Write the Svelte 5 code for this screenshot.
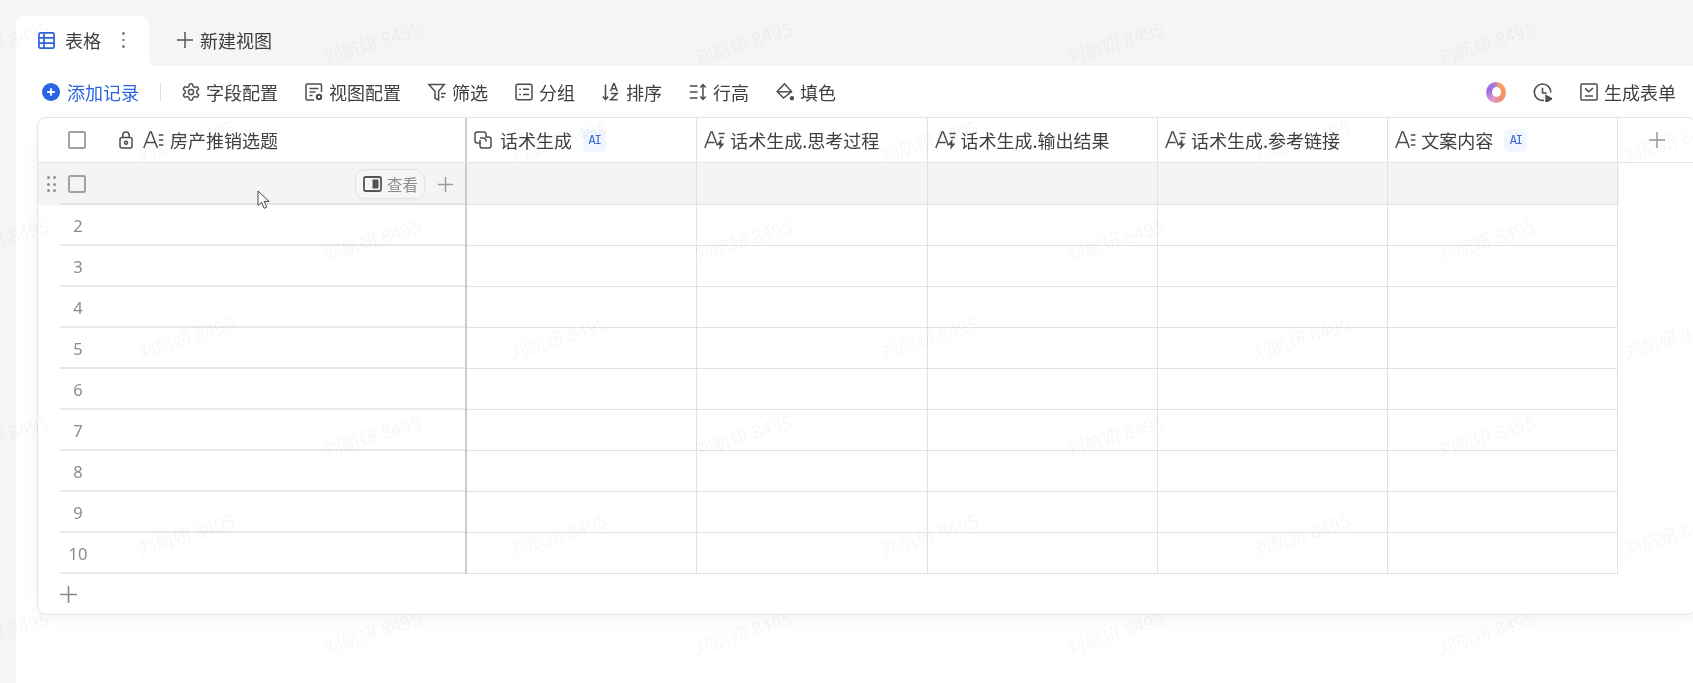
<script>
	const icons = {
		table: '<g stroke-width="1.8"><rect x="1" y="1" width="16" height="16" rx="1.5"/><path d="M1 6.3h16M1 11.7h16M6.3 1v16"/></g>',
		gear: '<path d="M12.22 2h-.44a2 2 0 0 0-2 2v.18a2 2 0 0 1-1 1.73l-.43.25a2 2 0 0 1-2 0l-.15-.08a2 2 0 0 0-2.73.73l-.22.38a2 2 0 0 0 .73 2.73l.15.1a2 2 0 0 1 1 1.72v.51a2 2 0 0 1-1 1.74l-.15.09a2 2 0 0 0-.73 2.73l.22.38a2 2 0 0 0 2.73.73l.15-.08a2 2 0 0 1 2 0l.43.25a2 2 0 0 1 1 1.73V20a2 2 0 0 0 2 2h.44a2 2 0 0 0 2-2v-.18a2 2 0 0 1 1-1.73l.43-.25a2 2 0 0 1 2 0l.15.08a2 2 0 0 0 2.73-.73l.22-.39a2 2 0 0 0-.73-2.73l-.15-.08a2 2 0 0 1-1-1.74v-.5a2 2 0 0 1 1-1.74l.15-.09a2 2 0 0 0 .73-2.73l-.22-.38a2 2 0 0 0-2.73-.73l-.15.08a2 2 0 0 1-2 0l-.43-.25a2 2 0 0 1-1-1.73V4a2 2 0 0 0-2-2z" transform="translate(-.9 -.9) scale(.825)" stroke-width="1.8"/><circle cx="9" cy="9" r="2.6"/>',
		viewcfg: '<path d="M9 17H2.2A1.2 1.2 0 0 1 1 15.8V2.2A1.2 1.2 0 0 1 2.2 1h13.1a1.2 1.2 0 0 1 1.2 1.2V9"/><path d="M4.5 5.5h9M4.5 9h6M4.5 12.5h3"/><circle cx="14" cy="14" r="2.2" stroke-width="2"/>',
		filter: '<path d="M.8 1.5h15.4l-5.6 6.8V17L7 15.2V8.3z"/><path d="M13 10.5h4.8M13 14h3.4"/>',
		group: '<rect x="1" y="1.2" width="16" height="15.6" rx="1.5"/><path d="M4.2 6.3h1.6M8 6.3h6M4.2 11.4h1.6M8 11.4h6"/>',
		sort: '<path d="M3.5 1.5v15M.8 13.4l2.7 3.1 2.7-3.1"/><path d="M8.6 8.3 11.6.8h.6l3 7.5M9.8 5.8h4.4M8.8 10.4h6.4L8.6 16.8h7"/>',
		height: '<path d="M.8 3h7.8M.8 9h7.8M.8 15h7.8"/><path d="M14 1.5v15M11.3 4.4 14 1.5l2.7 2.9M11.3 13.6 14 16.5l2.7-2.9"/>',
		fill: '<path d="M8.5.8 1.2 8.6l6.3 6.4 8-6.4z"/><path d="M1.6 8.8h13.8"/><circle cx="16" cy="15.2" r="2.2" fill="currentColor" stroke="none"/>',
		clock: '<path d="M10.5 16.4A7.8 7.8 0 1 1 16.8 9"/><path d="M9 4.5V9.4h4"/><path d="M12.4 12 17.8 15l-5.4 3z" fill="currentColor"/>',
		form: '<rect x=".9" y=".9" width="16.2" height="16.2" rx="1.2"/><path d="M5.2 5.4 8.6 8.8l4.4-3.6M5 13h8"/>',
		lock: '<rect x="1" y="6.5" width="12" height="10.5" rx="2"/><path d="M3.8 6.5V4.2a3.2 3.2 0 0 1 6.4 0v2.3"/><circle cx="7" cy="11.8" r="1.5"/>',
		text: '<path d="M.8 18 7 2h1.2l6.2 16M3 12.6h10"/><path d="M15.8 5h4.6M15.8 10h4.6M15.8 15h4.6"/>',
		spark: '<path d="M.8 18 7 2h1.2l5.2 13.6M3 12.6h7.6"/><path d="M14.5 3.5h6.2M15.6 7.5h4.2"/><path d="M17.4 8.8 12.8 15h3l-.8 5 5.4-6.6h-3z" fill="currentColor" stroke="none"/>',
		formula: '<path d="M6.5 12H3.2A2.2 2.2 0 0 1 1 9.8V3.2A2.2 2.2 0 0 1 3.2 1h6.6A2.2 2.2 0 0 1 12 3.2V6.5"/><path d="M6 7h3.5a2.5 2.5 0 0 1 2.5 2.5v1"/><path d="M12 6h2.8A2.2 2.2 0 0 1 17 8.2v6.6a2.2 2.2 0 0 1-2.2 2.2H8.2A2.2 2.2 0 0 1 6 14.8V9"/>',
		panel: '<rect x="1" y="1" width="17" height="14" rx="1.5" stroke-width="1.8"/><rect x="9.5" y="3.5" width="6" height="9" fill="currentColor" stroke="none"/>',
		plus: '<path d="M8 0v16M0 8h16"/>'
	};

	const boxes = { lock: '0 0 14 18', text: '0 0 21 20', spark: '0 0 21 20', panel: '0 0 19 16', plus: '0 0 16 16' };

	const tools = [
		{ icon: 'gear', label: '字段配置' },
		{ icon: 'viewcfg', label: '视图配置' },
		{ icon: 'filter', label: '筛选' },
		{ icon: 'group', label: '分组' },
		{ icon: 'sort', label: '排序' },
		{ icon: 'height', label: '行高' },
		{ icon: 'fill', label: '填色' }
	];

	const columns = [
		{ icon: 'formula', label: '话术生成', ai: true },
		{ icon: 'spark', label: '话术生成.思考过程' },
		{ icon: 'spark', label: '话术生成.输出结果' },
		{ icon: 'spark', label: '话术生成.参考链接' },
		{ icon: 'text', label: '文案内容', ai: true }
	];

	const rows = [2, 3, 4, 5, 6, 7, 8, 9, 10];

	// watermark tiles are staggered every other row
	const marks = [];
	for (let r = 0; r < 7; r++) {
		const startX = r % 2 ? 186 : 0;
		for (let c = 0; c < 5; c++) {
			marks.push({ x: startX + c * 371.5, y: 42 + r * 98.3 });
		}
	}
</script>

{#snippet icon(name, w, h = w)}
	<svg class="ico" width={w} height={h} viewBox={boxes[name] ?? '0 0 18 18'} aria-hidden="true">
		{@html icons[name]}
	</svg>
{/snippet}

<div class="page">
	<main class="main">
		<div class="tabs">
			<div class="tab">
				<span class="tab-icon">{@render icon('table', 17)}</span>
				<span>表格</span>
				<span class="more"><i></i><i></i><i></i></span>
			</div>
			<div class="new-view">
				<span class="new-plus">{@render icon('plus', 16)}</span>
				<span>新建视图</span>
			</div>
		</div>

		<div class="toolbar">
			<div class="add-record">
				<svg width="18" height="18" viewBox="0 0 18 18" aria-hidden="true">
					<circle cx="9" cy="9" r="9" fill="#2b63e3" />
					<path d="M9 5.2v7.6M5.2 9h7.6" stroke="#fff" stroke-width="1.8" />
				</svg>
				<span>添加记录</span>
			</div>
			<span class="sep"></span>
			{#each tools as tool}
				<div class="tool">
					{@render icon(tool.icon, 18)}
					<span>{tool.label}</span>
				</div>
			{/each}
			<div class="tool-right">
				<span class="ring"></span>
				<span class="clock">{@render icon('clock', 19)}</span>
				<div class="tool">
					{@render icon('form', 18)}
					<span>生成表单</span>
				</div>
			</div>
		</div>

		<div class="card">
			<div class="row head">
				<div class="cell frozen">
					<span class="check"></span>
					<span class="lock">{@render icon('lock', 14, 18)}</span>
					<span class="type">{@render icon('text', 21, 20)}</span>
					<span>房产推销选题</span>
				</div>
				{#each columns as col}
					<div class="cell col">
						<span class="col-icon" class:wide={col.icon !== 'formula'}>
							{#if col.icon === 'formula'}
								{@render icon(col.icon, 18)}
							{:else}
								{@render icon(col.icon, 21, 20)}
							{/if}
						</span>
						<span>{col.label}</span>
						{#if col.ai}<span class="ai">AI</span>{/if}
					</div>
				{/each}
				<div class="cell add-col">
					{@render icon('plus', 16)}
				</div>
			</div>

			<div class="row hovered">
				<div class="cell frozen">
					<span class="drag">
						<i></i><i></i><i></i><i></i><i></i><i></i>
					</span>
					<span class="check"></span>
					<div class="view-btn">
						{@render icon('panel', 19, 16)}
						<span>查看</span>
					</div>
					<span class="row-plus">{@render icon('plus', 15)}</span>
				</div>
				{#each columns as _}
					<div class="cell body"></div>
				{/each}
			</div>

			{#each rows as n}
				<div class="row">
					<div class="cell frozen plain">
						<span class="num">{n}</span>
					</div>
					{#each columns as _}
						<div class="cell body"></div>
					{/each}
				</div>
			{/each}

			<div class="add-row">
				{@render icon('plus', 17)}
			</div>
		</div>
	</main>

	<svg class="cursor" width="14" height="20" viewBox="0 0 14 20" aria-hidden="true">
		<path d="M1 1v14.5l3.6-3.2 2.5 6 2.6-1.1-2.5-5.8H12z" fill="#fff" stroke="#444" stroke-width="1" />
	</svg>

	<div class="marks" aria-hidden="true">
		{#each marks as m}
			<span class="mark" style="left:{m.x}px;top:{m.y}px">刘航妍 8495</span>
		{/each}
	</div>
</div>

<style>
	:global(body) {
		margin: 0;
		background: #f4f5f5;
	}

	.page {
		position: relative;
		width: 1693px;
		height: 683px;
		padding-left: 16px;
		box-sizing: border-box;
		overflow: hidden;
		background: #f4f5f5;
		color: #3f3f3f;
		font-family: 'Noto Sans CJK SC', 'Noto Sans', sans-serif;
		font-size: 18px;
		line-height: 24px;
		filter: blur(0.4px);
	}

	.main {
		height: 100%;
		display: flex;
		flex-direction: column;
		background: #fff;
	}

	.ico {
		display: block;
		flex-shrink: 0;
		fill: none;
		stroke: currentColor;
		stroke-width: 1.5;
	}

	.tabs {
		height: 66px;
		box-sizing: border-box;
		padding-top: 16px;
		display: flex;
		background: #f4f5f5;
	}

	.tab {
		position: relative;
		width: 133px;
		box-sizing: border-box;
		padding: 0 0 2px 22px;
		display: flex;
		align-items: center;
		gap: 10px;
		background: #fff;
		border-radius: 9px 9px 0 0;
	}

	.tab::after {
		content: '';
		position: absolute;
		right: -8px;
		bottom: 0;
		width: 8px;
		height: 8px;
		background: radial-gradient(circle at 100% 0, transparent 8px, #fff 8.5px);
	}

	.tab-icon {
		color: #2e62d9;
	}

	.more {
		display: flex;
		flex-direction: column;
		gap: 4px;
		margin-left: 11px;
	}

	.more i {
		width: 2.5px;
		height: 2.5px;
		border-radius: 50%;
		background: #8a8a8a;
	}

	.new-view {
		display: flex;
		align-items: center;
		gap: 7px;
		margin-left: 28px;
		padding-bottom: 2px;
	}

	.new-plus {
		color: #555;
	}

	.toolbar {
		height: 51px;
		box-sizing: border-box;
		padding: 1px 17px 0 26px;
		display: flex;
		align-items: center;
		gap: 27px;
	}

	.add-record {
		display: flex;
		align-items: center;
		gap: 7px;
		color: #2b63e3;
	}

	.sep {
		width: 1px;
		height: 20px;
		margin: 0 -6px;
		background: #dedede;
	}

	.tool {
		display: flex;
		align-items: center;
		gap: 6px;
		color: #3f3f3f;
	}

	.tool :global(svg) {
		color: #4d4d4d;
	}

	.tool-right {
		margin-left: auto;
		display: flex;
		align-items: center;
	}

	.ring {
		position: relative;
		width: 20px;
		height: 21px;
		border-radius: 50%;
		background: conic-gradient(from 20deg, #f3a25f, #f58f6c 120deg, #d79ad0 190deg, #9a6fe6 270deg, #a77ae8 330deg, #f3a25f);
	}

	.ring::after {
		content: '';
		position: absolute;
		inset: 5.5px 5.5px;
		border-radius: 50%;
		background: #fff;
	}

	.clock {
		margin-left: 27px;
		color: #4d4d4d;
	}

	.tool-right .tool {
		margin-left: 28px;
	}

	.card {
		width: 1660px;
		box-sizing: border-box;
		margin-left: 21px;
		background: #fff;
		border: 1px solid #e6e6e6;
		border-radius: 10px;
		box-shadow: 0 4px 14px rgba(0, 0, 0, 0.05);
	}

	.row {
		display: flex;
		height: 41px;
	}

	.head {
		height: 44px;
		border-bottom: 1px solid #e6e6e6;
	}

	.hovered {
		height: 42px;
		background: #f3f4f4;
		width: 1580.5px;
	}

	.cell {
		box-sizing: border-box;
		display: flex;
		align-items: center;
		flex-shrink: 0;
	}

	.frozen {
		width: 429px;
		padding-left: 30px;
		border-right: 2px solid #cbcbcb;
	}

	.hovered .frozen {
		padding-left: 9px;
		padding-right: 12px;
		position: relative;
	}

	.hovered .frozen::after {
		content: '';
		position: absolute;
		left: 22px;
		right: 0;
		bottom: 0;
		height: 2px;
		background: #e3e3e3;
	}

	.plain {
		position: relative;
		padding-left: 22px;
	}

	.plain::after {
		content: '';
		position: absolute;
		left: 22px;
		right: 0;
		bottom: 0;
		height: 2px;
		background: #e8e8e8;
	}

	.col {
		width: 230.3px;
		padding-left: 7px;
		border-right: 1px solid #e2e2e2;
		gap: 8px;
	}

	.col-icon {
		color: #4d4d4d;
	}

	.col-icon.wide {
		margin-right: -3px;
	}

	.body {
		width: 230.3px;
		border-right: 1px solid #e2e2e2;
		border-bottom: 1px solid #e2e2e2;
	}

	.add-col {
		flex: 1;
		padding-left: 31px;
		color: #999;
	}

	.check {
		width: 18px;
		height: 18px;
		box-sizing: border-box;
		border: 2px solid #a2a2a2;
		border-radius: 2px;
		flex-shrink: 0;
	}

	.lock {
		margin-left: 33px;
		color: #4d4d4d;
	}

	.type {
		margin: 0 6px 0 10px;
		color: #4d4d4d;
	}

	.ai {
		width: 23px;
		height: 23px;
		margin-left: 3px;
		border-radius: 5px;
		background: #f0f5fe;
		color: #3568d4;
		font-family: 'DejaVu Sans Mono', monospace;
		font-size: 12px;
		letter-spacing: -1.2px;
		line-height: 23px;
		text-align: center;
	}

	.drag {
		display: grid;
		grid-template-columns: 3px 3px;
		gap: 3.5px 3px;
		width: 9px;
		margin-right: 12px;
	}

	.drag i {
		width: 3px;
		height: 3px;
		border-radius: 50%;
		background: #8f8f8f;
	}

	.view-btn {
		margin-left: auto;
		width: 70px;
		height: 30px;
		box-sizing: border-box;
		padding-left: 7px;
		display: flex;
		align-items: center;
		gap: 5px;
		border: 1px solid #e4e4e4;
		border-radius: 10px;
		background: #f5f6f6;
		color: #555;
		box-shadow: 0 1px 2px rgba(0, 0, 0, 0.03);
	}

	.view-btn span {
		font-size: 15.5px;
		color: #8c8c8c;
	}

	.row-plus {
		margin-left: 13px;
		color: #9a9a9a;
	}

	.num {
		width: 36px;
		text-align: center;
		font-family: 'Noto Sans', sans-serif;
		font-size: 16.5px;
		color: #8c8c8c;
	}

	.add-row {
		height: 40px;
		box-sizing: border-box;
		padding-left: 22px;
		display: flex;
		align-items: center;
		color: #8a8a8a;
	}

	.cursor {
		position: absolute;
		left: 257px;
		top: 190px;
	}

	.marks {
		position: absolute;
		inset: 0;
		pointer-events: none;
	}

	.mark {
		position: absolute;
		transform: translate(-50%, -50%) rotate(-17deg);
		white-space: nowrap;
		font-size: 18.5px;
		color: rgba(0, 0, 0, 0.036);
	}
</style>
